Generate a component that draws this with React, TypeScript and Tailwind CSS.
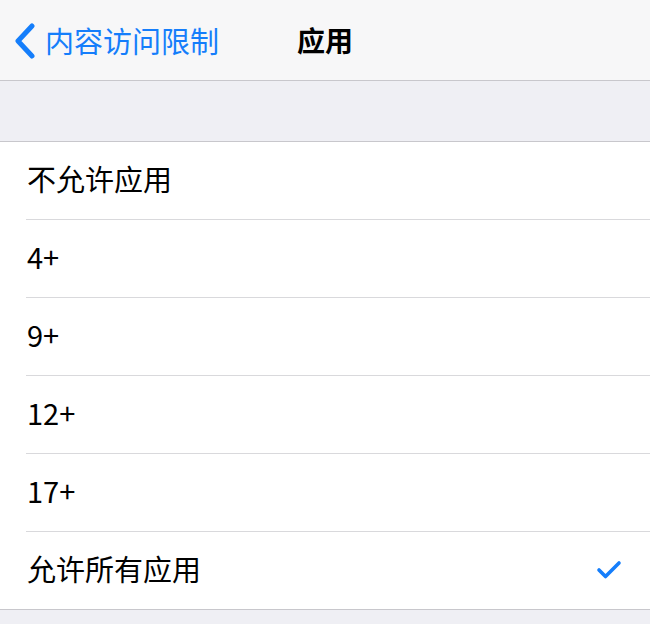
import React from "react";

const rows = ["不允许应用", "4+", "9+", "12+", "17+", "允许所有应用"];

export default function App() {
  return (
    <div
      className="w-[650px] h-[624px] bg-[#efeff4] overflow-hidden"
      style={{ fontFamily: '"Noto Sans CJK SC", "Noto Sans", sans-serif' }}
    >
      <div className="relative h-[81px] bg-[#f7f7f8] border-b border-[#c8c7cc] flex items-center">
        <div className="flex items-center pl-[14px] text-[#157efb]">
          <svg width="22" height="36" viewBox="0 0 22 36" className="mt-[2px]">
            <path d="M18 3 L4 18 L18 33" fill="none" stroke="#157efb" strokeWidth="5" strokeLinecap="round" strokeLinejoin="round" />
          </svg>
          <span className="ml-[9px] text-[29px] leading-none">内容访问限制</span>
        </div>
        <div className="absolute inset-x-0 top-0 h-full flex items-center justify-center pointer-events-none">
          <span className="text-[28px] font-bold leading-none text-black">应用</span>
        </div>
      </div>
      <div className="h-[60px]" />
      <div className="bg-white border-y border-[#c8c7cc]">
        {rows.map((r, i) => (
          <div key={r} className="pl-[26px]">
            <div
              className={
                i === 0
                  ? "h-[78px] flex items-center pr-[28px] pb-[5px] border-b border-[#d9d9dc]"
                  : i < rows.length - 1
                  ? "h-[78px] flex items-center pr-[28px] pb-[5px] border-b border-[#d9d9dc]"
                  : "h-[77px] flex items-center pr-[28px] pb-[5px]"
              }
            >
              <span className="pl-[1px] text-[29px] leading-none text-black flex-1">{r}</span>
              {i === rows.length - 1 && (
                <svg width="26" height="20" viewBox="0 0 26 20" className="mt-[3px]">
                  <path d="M3 10 L9.5 16.5 L23 3" fill="none" stroke="#157efb" strokeWidth="3.6" strokeLinecap="round" strokeLinejoin="round" />
                </svg>
              )}
            </div>
          </div>
        ))}
      </div>
    </div>
  );
}
